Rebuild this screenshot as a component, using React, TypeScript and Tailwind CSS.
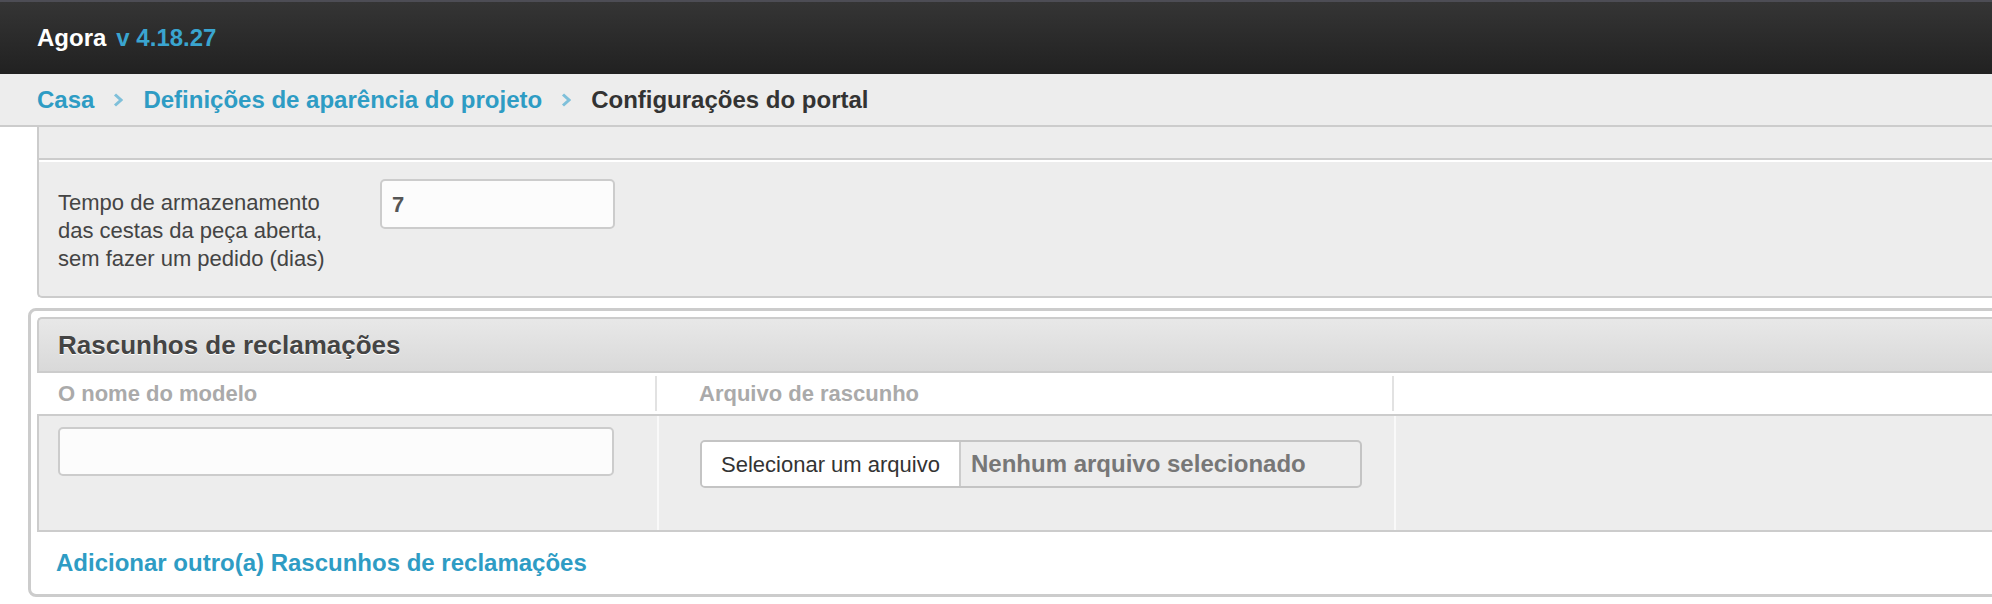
import React from 'react';

const Chevron: React.FC = () => (
  <svg width="10" height="14" viewBox="0 0 10 14" className="ml-[19px] mr-[20px] shrink-0">
    <path d="M2 1.5 L8 7 L2 12.5" fill="none" stroke="#7fc0da" strokeWidth="3" />
  </svg>
);

export default function App() {
  return (
    <div className="w-[1992px] h-[604px] overflow-hidden bg-white font-['Liberation_Sans',Arial,sans-serif]">
      {/* top bar */}
      <div className="h-[74px] border-t-2 border-[#4d4d55] bg-gradient-to-b from-[#353535] to-[#212121] flex items-center pl-[37px]">
        <span className="text-[24px] font-bold text-white">Agora</span>
        <span className="text-[24px] font-bold text-[#3aa5d0] ml-[10px]">v 4.18.27</span>
      </div>

      {/* breadcrumb */}
      <div className="h-[53px] bg-[#ededed] border-b-2 border-[#cccccc] flex items-center pl-[37px] text-[24px] font-bold">
        <a className="text-[#2e9cc4]">Casa</a>
        <Chevron />
        <a className="text-[#2e9cc4]">Definições de aparência do projeto</a>
        <Chevron />
        <span className="text-[#333333]">Configurações do portal</span>
      </div>

      {/* previous settings block, scrolled partly out of view */}
      <div className="ml-[37px] w-[2000px] border-l-2 border-[#cccccc] bg-[#ededed] rounded-bl-[5px] border-b-2">
        <div className="h-[33px] border-b-2 border-[#cccccc]" />
        <div className="border-t-2 border-white h-[136px] flex items-start pl-[19px] pt-[17px]">
          <label className="w-[300px] text-[22px] leading-[28px] text-[#444444] mt-[10px]">
            Tempo de armazenamento
            <br />
            das cestas da peça aberta,
            <br />
            sem fazer um pedido (dias)
          </label>
          <div className="ml-[22px] w-[235px] h-[50px] rounded-[5px] border-2 border-[#cccccc] bg-[#fcfcfc] flex items-center pl-[10px] text-[22px] font-bold text-[#555555]">
            7
          </div>
        </div>
      </div>

      {/* claim drafts */}
      <div className="mt-[10px] ml-[28px] w-[2020px] h-[289px] flex flex-col border-[3px] border-[#cccccc] rounded-[8px] bg-white pt-[6px] pl-[6px]">
        <div className="h-[56px] shrink-0 rounded-tl-[5px] border-2 border-r-0 border-[#cccccc] bg-gradient-to-b from-[#e8e8e8] to-[#d9d9d9] flex items-center pl-[19px]">
          <h2 className="text-[26px] font-bold text-[#444444] [text-shadow:0_1px_0_#ffffff]">Rascunhos de reclamações</h2>
        </div>

        <div className="grid grid-cols-[618px_737px_1fr] h-[41px] shrink-0 items-center">
          <div className="pl-[21px] text-[22px] font-bold text-[#aaaaaa]">O nome do modelo</div>
          <div className="h-[35px] border-l-2 border-[#e2e2e2] flex items-center pl-[42px] text-[22px] font-bold text-[#aaaaaa]">
            Arquivo de rascunho
          </div>
          <div className="h-[35px] border-l-2 border-[#e2e2e2]" />
        </div>

        <div className="grid grid-cols-[618px_737px_1fr] h-[118px] shrink-0 bg-[#ededed] border-y-2 border-l-2 border-[#cccccc]">
          <div className="pl-[19px] pt-[11px]">
            <div className="w-[556px] h-[49px] rounded-[5px] border-2 border-[#cccccc] bg-[#fcfcfc]" />
          </div>
          <div className="border-l-2 border-[#f9f9f9] pl-[41px] pt-[24px]">
            <div className="w-[662px] h-[48px] rounded-[5px] border-2 border-[#c4c4c4] flex overflow-hidden">
              <div className="w-[259px] bg-white border-r-2 border-[#cccccc] flex items-center pl-[19px] text-[22px] text-[#333333]">
                Selecionar um arquivo
              </div>
              <div className="flex-1 flex items-center pl-[10px] text-[24px] font-bold text-[#777777]">
                Nenhum arquivo selecionado
              </div>
            </div>
          </div>
          <div className="border-l-2 border-[#f9f9f9]" />
        </div>

        <div className="flex-1 flex items-center pl-[19px]">
          <a className="text-[24px] font-bold text-[#2e9cc4]">Adicionar outro(a) Rascunhos de reclamações</a>
        </div>
      </div>
    </div>
  );
}
